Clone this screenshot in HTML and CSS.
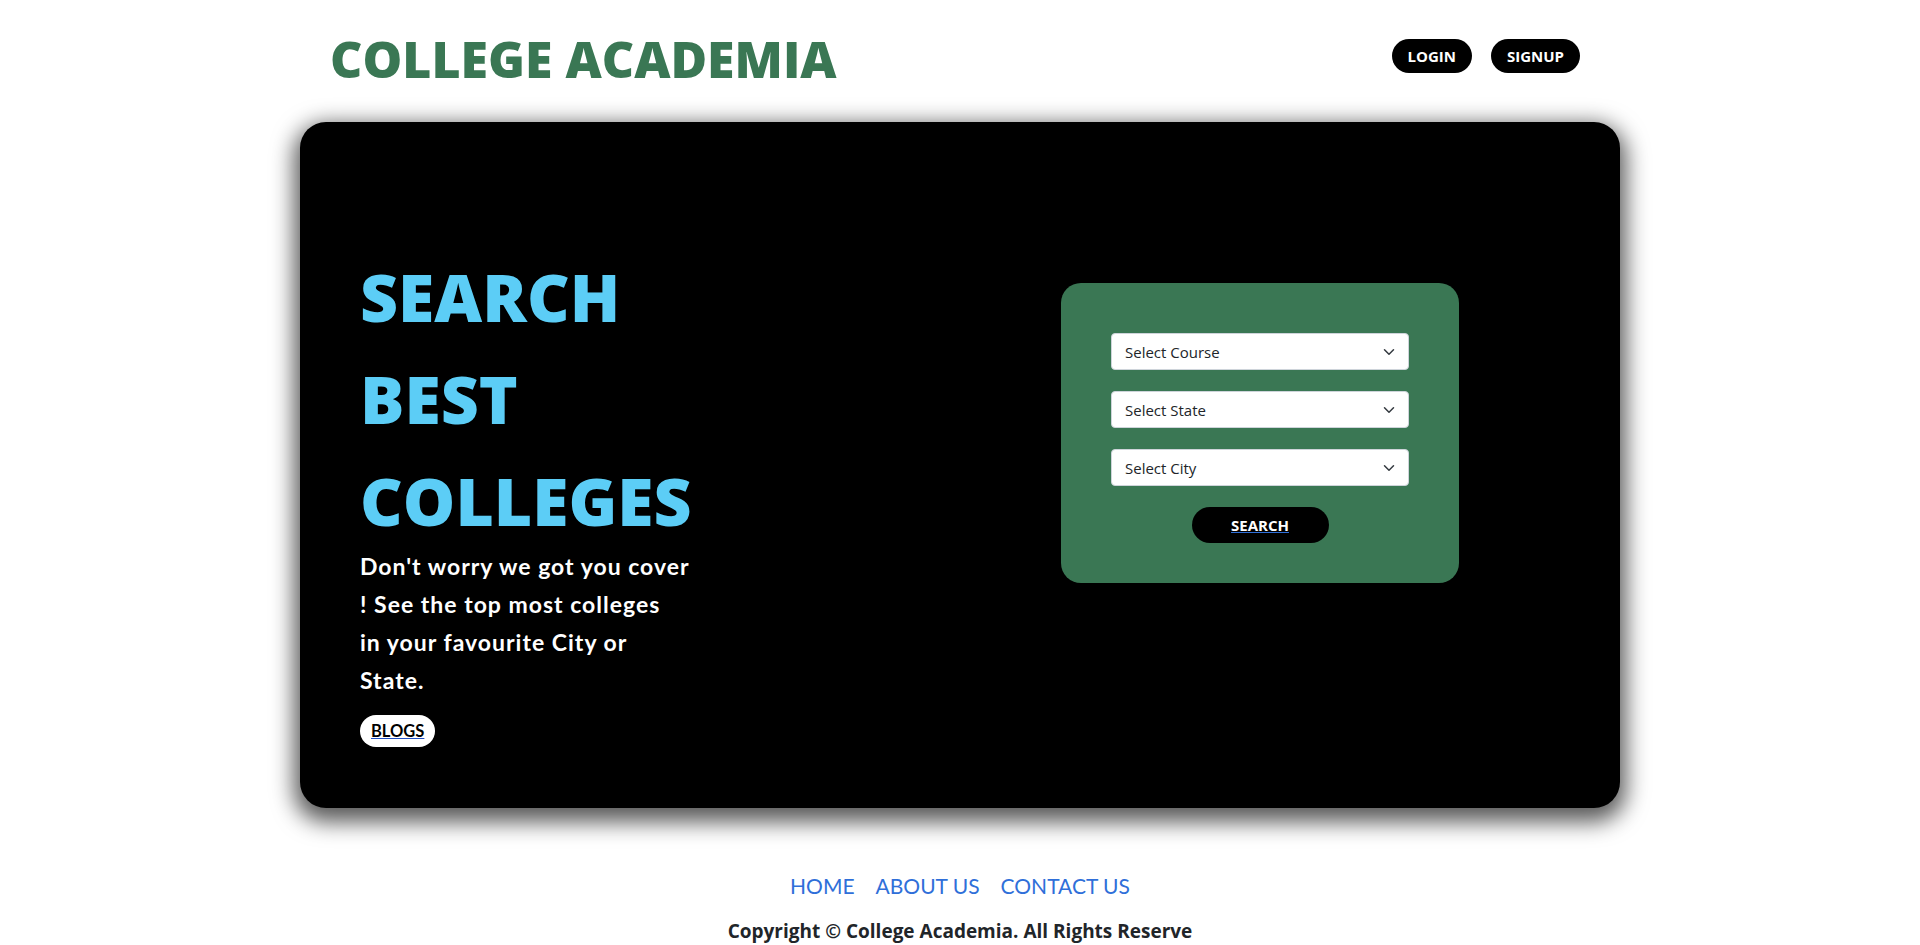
FILE: index.html
```html
<!DOCTYPE html>
<html lang="en">
<head>
<meta charset="utf-8">
<title>College Academia</title>
<link rel="stylesheet" href="styles.css">
</head>
<body>
<div class="container">
  <header class="topbar">
    <div class="logo">COLLEGE ACADEMIA</div>
    <nav class="auth">
      <a class="pill-btn" href="#">LOGIN</a>
      <a class="pill-btn" href="#">SIGNUP</a>
    </nav>
  </header>

  <section class="hero">
    <div class="hero-left">
      <h1 class="hero-title">SEARCH BEST COLLEGES</h1>
      <p class="hero-text">Don't worry we got you cover<br>! See the top most colleges<br>in your favourite City or<br>State.</p>
      <a class="blogs-btn" href="#">BLOGS</a>
    </div>
    <div class="hero-right">
      <form class="search-box">
        <div class="select-wrap">
          <select class="field"><option>Select Course</option></select>
          <svg class="chev" viewBox="0 0 16 16" width="16" height="12"><path d="M2 5l6 6 6-6" fill="none" stroke="#343a40" stroke-width="2" stroke-linecap="round" stroke-linejoin="round"/></svg>
        </div>
        <div class="select-wrap">
          <select class="field"><option>Select State</option></select>
          <svg class="chev" viewBox="0 0 16 16" width="16" height="12"><path d="M2 5l6 6 6-6" fill="none" stroke="#343a40" stroke-width="2" stroke-linecap="round" stroke-linejoin="round"/></svg>
        </div>
        <div class="select-wrap">
          <select class="field"><option>Select City</option></select>
          <svg class="chev" viewBox="0 0 16 16" width="16" height="12"><path d="M2 5l6 6 6-6" fill="none" stroke="#343a40" stroke-width="2" stroke-linecap="round" stroke-linejoin="round"/></svg>
        </div>
        <a class="search-btn" href="#">SEARCH</a>
      </form>
    </div>
  </section>

  <footer class="footer">
    <nav class="foot-links">
      <a href="#">HOME</a>
      <a href="#">ABOUT US</a>
      <a href="#">CONTACT US</a>
    </nav>
    <p class="copy">Copyright © College Academia. All Rights Reserve</p>
  </footer>
</div>
</body>
</html>
```

FILE: styles.css
```css
* { box-sizing: border-box; }

body {
  margin: 0;
  background: #fff;
  font-family: "Open Sans", "Noto Sans", sans-serif;
  color: #212529;
}

.container {
  width: 1320px;
  margin: 0 auto;
}

.topbar {
  display: flex;
  justify-content: space-between;
  align-items: center;
  height: 122px;
  padding: 0 40px 10px 30px;
}

.logo {
  font-family: "Open Sans", sans-serif;
  font-weight: 800;
  font-size: 50px;
  color: #3a7754;
  line-height: 1;
  padding-top: 5px;
}

.auth {
  display: flex;
  gap: 19px;
}

.pill-btn {
  display: inline-flex;
  align-items: center;
  justify-content: center;
  height: 34px;
  padding: 0 16px;
  background: #000;
  color: #fff;
  border-radius: 17px;
  font-weight: 700;
  font-size: 15px;
  text-decoration: none;
}

.hero {
  display: grid;
  grid-template-columns: 1fr 1fr;
  background: #000;
  border-radius: 26px;
  padding: 0 60px;
  min-height: 686px;
  box-shadow: 0 8px 22px 6px rgba(0, 0, 0, 0.65);
}

.hero-left {
  padding: 123px 0 61px;
}

.hero-title {
  margin: 0;
  width: 340px;
  font-family: "Open Sans", sans-serif;
  font-weight: 800;
  font-size: 66px;
  line-height: 102px;
  color: #5ccdf6;
}

.hero-text {
  margin: -4px 0 0;
  width: 350px;
  font-family: "Lato", sans-serif;
  font-weight: 700;
  font-size: 23px;
  letter-spacing: 1px;
  line-height: 38px;
  color: #fff;
}

.blogs-btn {
  display: inline-flex;
  align-items: center;
  justify-content: center;
  margin-top: 16px;
  height: 32px;
  padding: 0 11px;
  background: #fff;
  color: #000;
  border-radius: 16px;
  font-family: "Lato", sans-serif;
  font-weight: 700;
  font-size: 16.5px;
  text-decoration: underline;
  text-decoration-color: #1f4fc4;
}

.hero-right {
  display: flex;
  justify-content: center;
  align-items: flex-start;
  padding-top: 161px;
}

.search-box {
  width: 398px;
  background: #3a7754;
  border-radius: 20px;
  padding: 50px 50px 40px;
  display: flex;
  flex-direction: column;
  align-items: center;
  gap: 21px;
}

.select-wrap {
  position: relative;
  width: 298px;
}

.field {
  appearance: none;
  -webkit-appearance: none;
  width: 100%;
  height: 37px;
  padding: 0 36px 0 13px;
  border: 1px solid #ced4da;
  border-radius: 4px;
  background: #fff;
  color: #212529;
  font-family: "Open Sans", sans-serif;
  font-size: 15px;
}

.chev {
  position: absolute;
  right: 12px;
  top: 13px;
  pointer-events: none;
}

.search-btn {
  display: inline-flex;
  align-items: center;
  justify-content: center;
  width: 137px;
  height: 36px;
  background: #000;
  color: #fff;
  border-radius: 18px;
  font-weight: 700;
  font-size: 15px;
  text-decoration: underline;
  text-decoration-color: #2f6fd9;
}

.footer {
  padding-top: 64px;
  text-align: center;
}

.foot-links {
  display: flex;
  justify-content: center;
  gap: 21px;
}

.foot-links a {
  font-family: "Lato", sans-serif;
  font-size: 21px;
  color: #2f6fd9;
  text-decoration: none;
  line-height: 28px;
}

.copy {
  margin: 18px 0 0;
  font-weight: 700;
  font-size: 19px;
  color: #212529;
}
```
